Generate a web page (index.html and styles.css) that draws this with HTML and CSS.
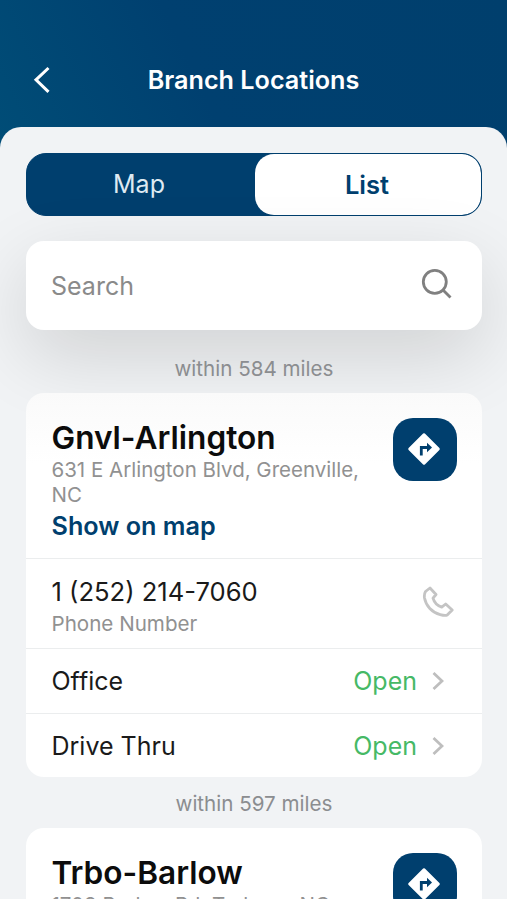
FILE: index.html
```html
<!DOCTYPE html>
<html lang="en">
<head>
    <meta charset="UTF-8">
    <meta name="viewport" content="width=device-width, initial-scale=1.0">
    <title>Branch Locations</title>
    <link rel="stylesheet" href="styles.css">
</head>
<body>
    <header class="header">
        <svg class="back" width="20" height="30" viewBox="0 0 20 30">
            <path d="M16.500 3L4 14.800l12.500 12"/>
        </svg>
        <h1>Branch Locations</h1>
    </header>

    <main class="sheet">
        <div class="toggle">
            <div class="tab">Map</div>
            <div class="tab active">List</div>
        </div>

        <div class="search">
            <span>Search</span>
            <svg width="32" height="32" viewBox="0 0 32 32">
                <circle cx="13.800" cy="13.800" r="11.500"/>
                <path d="M22 22l7.500 7.500"/>
            </svg>
        </div>

        <p class="distance">within 584 miles</p>
        <section class="card first">
            <div class="branch">
                <div class="info">
                    <h2>Gnvl-Arlington</h2>
                    <p class="address">631 E Arlington Blvd, Greenville, NC</p>
                    <a class="map-link">Show on map</a>
                </div>
                <div class="directions">
                    <svg width="34" height="34" viewBox="0 0 34 34">
                        <path class="sign" d="M17 2.500L31.500 17 17 31.500 2.500 17z"/>
                        <path class="turn" d="M14.300 23.500v-8h7"/>
                        <path class="tip" d="M20 10.800l5 4.700-5 4.700z"/>
                    </svg>
                </div>
            </div>
            <div class="row phone">
                <div>
                    <p class="number">1 (252) 214-7060</p>
                    <p class="caption">Phone Number</p>
                </div>
                <svg class="phone-icon" width="32" height="32" viewBox="0 0 32 32">
                    <path d="M3.500 5.500L8 2l6 6.500-3 3.700c1.200 4.300 4.300 7.500 8.700 9l4-3.200 6.500 6-5 5c-1.500.8-4.500.3-7-.4C10 26.500 4 20 2.500 12c-.3-2-.3-4.200 1-6.500z"/>
                </svg>
            </div>
            <div class="row">
                <span>Office</span>
                <span class="status">Open</span>
                <svg class="chevron" width="12" height="20" viewBox="0 0 12 20">
                    <path d="M1.500 2l8.500 8-8.500 8"/>
                </svg>
            </div>
            <div class="row last">
                <span>Drive Thru</span>
                <span class="status">Open</span>
                <svg class="chevron" width="12" height="20" viewBox="0 0 12 20">
                    <path d="M1.500 2l8.500 8-8.500 8"/>
                </svg>
            </div>
        </section>

        <p class="distance">within 597 miles</p>
        <section class="card">
            <div class="branch">
                <div class="info">
                    <h2>Trbo-Barlow</h2>
                    <p class="address">1708 Barlow Rd, Tarboro, NC</p>
                </div>
                <div class="directions">
                    <svg width="34" height="34" viewBox="0 0 34 34">
                        <path class="sign" d="M17 2.500L31.500 17 17 31.500 2.500 17z"/>
                        <path class="turn" d="M14.300 23.500v-8h7"/>
                        <path class="tip" d="M20 10.800l5 4.700-5 4.700z"/>
                    </svg>
                </div>
            </div>
        </section>
    </main>
</body>
</html>
```
FILE: styles.css
```css
* {
    box-sizing: border-box;
}
body {
    font-family: Inter, "Liberation Sans", sans-serif;
    background: linear-gradient(65deg, #004d77 0%, #004070 40%, #003f6d 100%) no-repeat 0 0 / 100% 150px;
    margin: 0;
    height: 900px;
    overflow: hidden;
    color: #1a1a1a;
}
h1, h2, p {
    margin: 0;
}
svg {
    display: block;
    fill: none;
}
.header {
    height: 127px;
    padding: 33px 32px 0;
    display: grid;
    grid-template-columns: 20px 1fr 20px;
    align-items: center;
}
.header h1 {
    color: #fff;
    font-size: 25.2px;
    font-weight: 600;
    text-align: center;
}
.back path {
    stroke: #fff;
    stroke-width: 3;
}
.sheet {
    height: 773px;
    padding: 26px 25px 0 26px;
    background: #f1f3f5;
    border-bottom: 1px solid #fff;
    border-radius: 21px 21px 0 0;
    overflow: hidden;
}
.toggle {
    display: grid;
    grid-template-columns: 1fr 226px;
    height: 63px;
    border: 1.5px solid #003f6e;
    border-radius: 20px;
    background: #003f6e;
    overflow: hidden;
}
.tab {
    display: flex;
    align-items: center;
    justify-content: center;
    padding-bottom: 1px;
    color: #dfeaf2;
    font-size: 25px;
}
.tab:first-child {
    padding-right: 4px;
}
.tab.active {
    background: #fff;
    color: #003f6e;
    font-size: 25.5px;
    font-weight: 600;
    border-radius: 19px;
    padding-right: 2px;
}
.search {
    position: relative;
    display: flex;
    align-items: center;
    justify-content: space-between;
    height: 89px;
    margin-top: 25px;
    padding: 0 29px 0 25px;
    background: #fff;
    border-radius: 18px;
    box-shadow: 0 25px 76px rgba(0, 0, 0, 0.14);
    color: #8a8a8a;
    font-size: 25px;
}
.search svg {
    margin-top: -3px;
    stroke: #808080;
    stroke-width: 2.8;
}
.distance {
    position: relative;
    height: 51px;
    line-height: 53px;
    text-align: center;
    color: #8b8d90;
    font-size: 20.6px;
}
.search + .distance {
    height: 63px;
    line-height: 78px;
}
.card {
    position: relative;
    background: #fff;
    border-radius: 18px;
}
.card.first {
    background: linear-gradient(#fafafa 0, #fff 70px);
}
.branch {
    display: flex;
    justify-content: space-between;
    height: 165px;
    padding: 25px 25px 0 25.5px;
}
.info {
    width: 325px;
}
.info h2 {
    font-size: 31.6px;
    line-height: 39px;
    font-weight: 600;
    color: #0c0c0c;
}
.address {
    font-size: 20.5px;
    line-height: 25px;
    color: #919191;
}
.map-link {
    display: block;
    font-size: 25.2px;
    line-height: 39px;
    font-weight: 600;
    color: #003f6e;
}
.directions {
    display: flex;
    align-items: center;
    justify-content: center;
    padding: 0 2px 1px 0;
    width: 64px;
    height: 63px;
    border-radius: 20px;
    background: #003f6e;
}
.sign {
    fill: #fff;
    stroke: #fff;
    stroke-width: 2.5;
    stroke-linejoin: round;
}
.turn {
    stroke: #003f6e;
    stroke-width: 2.8;
}
.tip {
    fill: #003f6e;
}
.row {
    display: flex;
    align-items: center;
    height: 64.5px;
    padding: 1px 38px 0 25.5px;
    border-top: 1px solid #ebedee;
    font-size: 25px;
}
.row.phone {
    height: 90px;
    padding: 5px 28px 0 25.5px;
    justify-content: space-between;
}
.row.last {
    padding-top: 2px;
}
.number {
    font-size: 25.6px;
    line-height: 34px;
}
.caption {
    font-size: 20.6px;
    line-height: 29px;
    color: #919191;
}
.phone-icon {
    margin-top: -8px;
    stroke: #c4c4c4;
    stroke-width: 2.8;
    stroke-linejoin: round;
}
.status {
    margin-left: auto;
    margin-right: 15px;
    color: #46b966;
}
.chevron {
    stroke: #bebebe;
    stroke-width: 2.8;
}
```
